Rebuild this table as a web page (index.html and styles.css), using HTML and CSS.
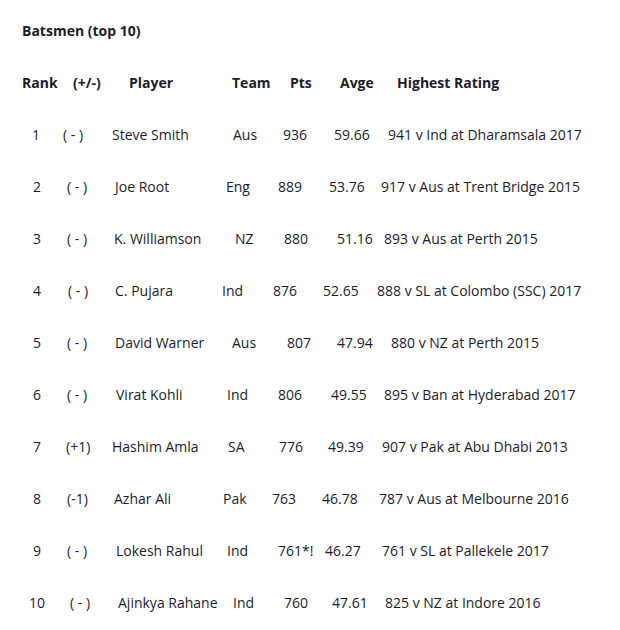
FILE: index.html
```html
<!DOCTYPE html>
<html>
<head>
<meta charset="utf-8">
<link rel="stylesheet" href="styles.css">
</head>
<body>
<div class="page">
  <h2 class="title">Batsmen (top 10)</h2>
  <div class="ranking">
    <div class="row head">
      <span style="--dx:0px">Rank</span><span style="--dx:10px">(+/-)</span><span style="--dx:17px">Player</span><span style="--dx:10px">Team</span><span style="--dx:18px">Pts</span><span style="--dx:18px">Avge</span><span style="--dx:20px">Highest Rating</span>
    </div>
    <div class="row">
      <span style="--dx:10px">1</span><span style="--dx:0px">( - )</span><span style="--dx:0px">Steve Smith</span><span style="--dx:11px">Aus</span><span style="--dx:11px">936</span><span style="--dx:12px">59.66</span><span style="--dx:11px">941 v Ind at Dharamsala 2017</span>
    </div>
    <div class="row">
      <span style="--dx:11px">2</span><span style="--dx:4px">( - )</span><span style="--dx:3px">Joe Root</span><span style="--dx:4px">Eng</span><span style="--dx:6px">889</span><span style="--dx:7px">53.76</span><span style="--dx:4px">917 v Aus at Trent Bridge 2015</span>
    </div>
    <div class="row">
      <span style="--dx:11px">3</span><span style="--dx:4px">( - )</span><span style="--dx:2px">K. Williamson</span><span style="--dx:13px">NZ</span><span style="--dx:12px">880</span><span style="--dx:15px">51.16</span><span style="--dx:7px">893 v Aus at Perth 2015</span>
    </div>
    <div class="row">
      <span style="--dx:11px">4</span><span style="--dx:5px">( - )</span><span style="--dx:3px">C. Pujara</span><span style="--dx:0px">Ind</span><span style="--dx:1px">876</span><span style="--dx:1px">52.65</span><span style="--dx:0px">888 v SL at Colombo (SSC) 2017</span>
    </div>
    <div class="row">
      <span style="--dx:11px">5</span><span style="--dx:4px">( - )</span><span style="--dx:3px">David Warner</span><span style="--dx:10px">Aus</span><span style="--dx:15px">807</span><span style="--dx:15px">47.94</span><span style="--dx:14px">880 v NZ at Perth 2015</span>
    </div>
    <div class="row">
      <span style="--dx:11px">6</span><span style="--dx:4px">( - )</span><span style="--dx:4px">Virat Kohli</span><span style="--dx:5px">Ind</span><span style="--dx:6px">806</span><span style="--dx:9px">49.55</span><span style="--dx:7px">895 v Ban at Hyderabad 2017</span>
    </div>
    <div class="row">
      <span style="--dx:11px">7</span><span style="--dx:3px">(+1)</span><span style="--dx:0px">Hashim Amla</span><span style="--dx:6px">SA</span><span style="--dx:7px">776</span><span style="--dx:6px">49.39</span><span style="--dx:5px">907 v Pak at Abu Dhabi 2013</span>
    </div>
    <div class="row">
      <span style="--dx:11px">8</span><span style="--dx:4px">(-1)</span><span style="--dx:2px">Azhar Ali</span><span style="--dx:1px">Pak</span><span style="--dx:0px">763</span><span style="--dx:0px">46.78</span><span style="--dx:2px">787 v Aus at Melbourne 2016</span>
    </div>
    <div class="row">
      <span style="--dx:11px">9</span><span style="--dx:4px">( - )</span><span style="--dx:4px">Lokesh Rahul</span><span style="--dx:5px">Ind</span><span style="--dx:6px">761*!</span><span style="--dx:3px">46.27</span><span style="--dx:5px">761 v SL at Pallekele 2017</span>
    </div>
    <div class="row">
      <span style="--dx:7px">10</span><span style="--dx:7px">( - )</span><span style="--dx:6px">Ajinkya Rahane</span><span style="--dx:11px">Ind</span><span style="--dx:12px">760</span><span style="--dx:10px">47.61</span><span style="--dx:8px">825 v NZ at Indore 2016</span>
    </div>
  </div>
</div>
</body>
</html>
```

FILE: styles.css
```css
html, body {
  margin: 0;
  padding: 0;
  background: #ffffff;
}

.page {
  padding: 5px 0 0 22px;
  font-family: "Open Sans", "Noto Sans", sans-serif;
  font-size: 14px;
  color: #1c1c2a;
}

.title {
  margin: 0;
  font-size: 14px;
  font-weight: 700;
  line-height: 52px;
}

.ranking {
  display: flex;
  flex-direction: column;
}

.row {
  display: grid;
  grid-template-columns: 41px 49px 110px 50px 50px 55px 1fr;
  height: 52px;
  line-height: 52px;
  white-space: nowrap;
}

.row > span {
  padding-left: var(--dx, 0px);
}

.row.head {
  font-weight: 700;
}
```
